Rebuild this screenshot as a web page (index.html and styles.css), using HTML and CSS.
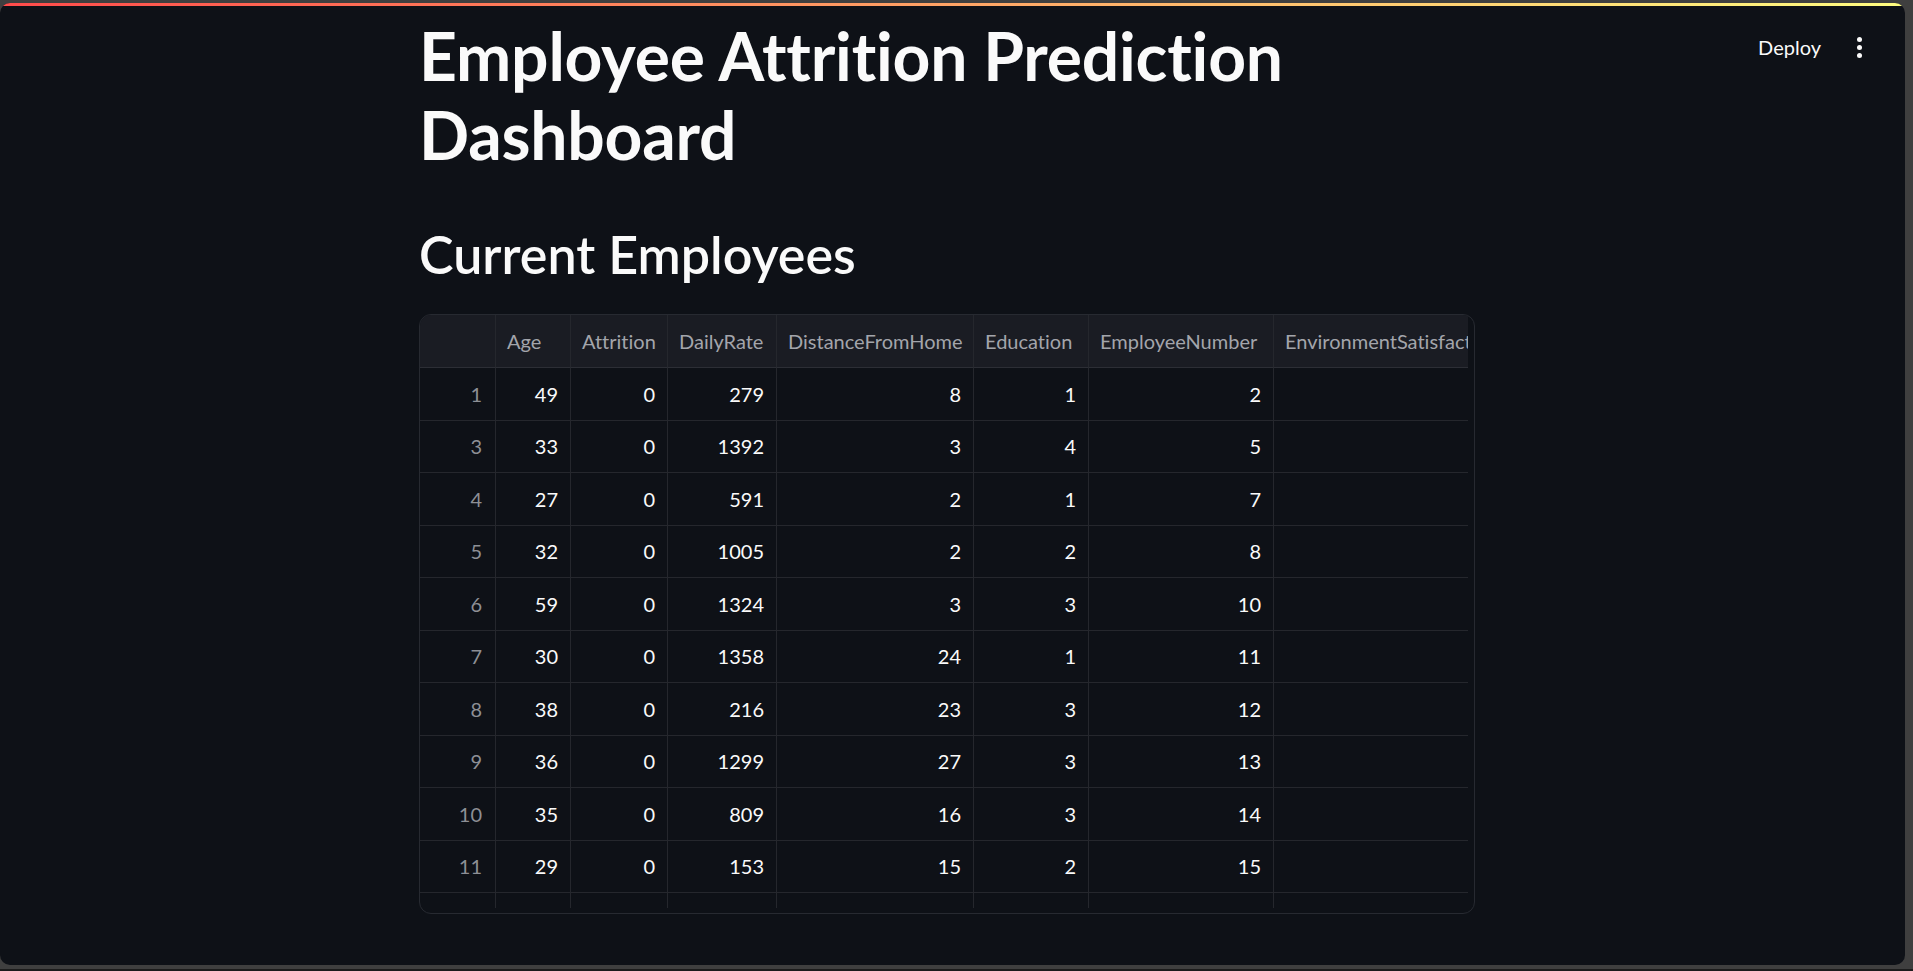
FILE: index.html
```html
<!DOCTYPE html>
<html lang="en">
<head>
<meta charset="utf-8">
<title>Employee Attrition Prediction Dashboard</title>
<link rel="stylesheet" href="styles.css">
</head>
<body>
<div class="frame">
  <div class="app">
    <div class="decoration"></div>
    <header class="toolbar">
      <span class="deploy">Deploy</span>
      <span class="kebab"><i></i><i></i><i></i></span>
    </header>
    <main class="main">
      <div class="block">
        <h1 class="title">Employee Attrition Prediction Dashboard</h1>
        <h2 class="subtitle">Current Employees</h2>
        <div class="table-wrap">
          <div class="grid">
            <div class="hc"></div>
            <div class="hc">Age</div>
            <div class="hc">Attrition</div>
            <div class="hc">DailyRate</div>
            <div class="hc">DistanceFromHome</div>
            <div class="hc">Education</div>
            <div class="hc">EmployeeNumber</div>
            <div class="hc">EnvironmentSatisfaction</div>

            <div class="ic">1</div><div class="c">49</div><div class="c">0</div><div class="c">279</div><div class="c">8</div><div class="c">1</div><div class="c">2</div><div class="c"></div>
            <div class="ic">3</div><div class="c">33</div><div class="c">0</div><div class="c">1392</div><div class="c">3</div><div class="c">4</div><div class="c">5</div><div class="c"></div>
            <div class="ic">4</div><div class="c">27</div><div class="c">0</div><div class="c">591</div><div class="c">2</div><div class="c">1</div><div class="c">7</div><div class="c"></div>
            <div class="ic">5</div><div class="c">32</div><div class="c">0</div><div class="c">1005</div><div class="c">2</div><div class="c">2</div><div class="c">8</div><div class="c"></div>
            <div class="ic">6</div><div class="c">59</div><div class="c">0</div><div class="c">1324</div><div class="c">3</div><div class="c">3</div><div class="c">10</div><div class="c"></div>
            <div class="ic">7</div><div class="c">30</div><div class="c">0</div><div class="c">1358</div><div class="c">24</div><div class="c">1</div><div class="c">11</div><div class="c"></div>
            <div class="ic">8</div><div class="c">38</div><div class="c">0</div><div class="c">216</div><div class="c">23</div><div class="c">3</div><div class="c">12</div><div class="c"></div>
            <div class="ic">9</div><div class="c">36</div><div class="c">0</div><div class="c">1299</div><div class="c">27</div><div class="c">3</div><div class="c">13</div><div class="c"></div>
            <div class="ic">10</div><div class="c">35</div><div class="c">0</div><div class="c">809</div><div class="c">16</div><div class="c">3</div><div class="c">14</div><div class="c"></div>
            <div class="ic">11</div><div class="c">29</div><div class="c">0</div><div class="c">153</div><div class="c">15</div><div class="c">2</div><div class="c">15</div><div class="c"></div>
            <div class="ic"></div><div class="c"></div><div class="c"></div><div class="c"></div><div class="c"></div><div class="c"></div><div class="c"></div><div class="c"></div>
          </div>
        </div>
      </div>
    </main>
  </div>
</div>
</body>
</html>
```

FILE: styles.css
```css
* { box-sizing: border-box; }

html, body {
  margin: 0;
  padding: 0;
  background: #3d3d3d;
  overflow: hidden;
}

body {
  font-family: Lato, "Noto Sans", sans-serif;
  font-variant-ligatures: none;
  color: #fafafa;
}

.frame {
  height: 971px;
  padding-top: 3px;
  background: #3f3f3f;
  border-bottom: 2px solid #1c1c1c;
}

.app {
  position: relative;
  height: 962px;
  margin-right: 8px;
  background: #0e1117;
  border-radius: 10px;
  overflow: hidden;
}

.decoration {
  height: 3px;
  background: linear-gradient(90deg, rgb(255, 75, 75), rgb(255, 253, 128));
}

.toolbar {
  position: absolute;
  top: 29px;
  right: 41px;
  display: flex;
  align-items: center;
  gap: 33px;
}

.deploy {
  font-size: 20px;
  line-height: 30px;
  color: #fafafa;
}

.kebab {
  display: flex;
  flex-direction: column;
  align-items: center;
  gap: 3px;
  width: 10px;
}

.kebab i {
  display: block;
  width: 5px;
  height: 5px;
  border-radius: 50%;
  background: #fafafa;
}

.main {
  padding: 10px 11px 0 0;
}

.block {
  width: 1056px;
  margin: 0 auto;
}

.title {
  margin: 0;
  font-size: 66px;
  line-height: 79px;
  font-weight: 700;
  letter-spacing: -0.2px;
  width: 900px;
}

.subtitle {
  margin: 48px 0 27px;
  font-size: 52px;
  line-height: 65px;
  font-weight: 600;
}

.table-wrap {
  height: 600px;
  border: 1px solid #272a31;
  border-radius: 12px;
  overflow: hidden;
  padding: 0 6px 5px 0;
}

.grid {
  height: 100%;
  overflow: hidden;
  display: grid;
  grid-template-columns: 76px 75px 97px 109px 197px 115px 185px 300px;
  grid-template-rows: 53px;
  grid-auto-rows: 52.5px;
  font-size: 20px;
}

.hc, .ic, .c {
  display: flex;
  align-items: center;
  border-right: 1px solid #25272d;
  border-bottom: 1px solid #25272d;
  white-space: nowrap;
  overflow: hidden;
}

.hc {
  background: #1a1c23;
  color: #a3a5ab;
  padding-left: 11px;
  border-bottom-color: #2c2e35;
}

.ic {
  justify-content: flex-end;
  padding-right: 13px;
  color: #8d8f95;
}

.c {
  justify-content: flex-end;
  padding-right: 12px;
  color: #fafafa;
}
```
